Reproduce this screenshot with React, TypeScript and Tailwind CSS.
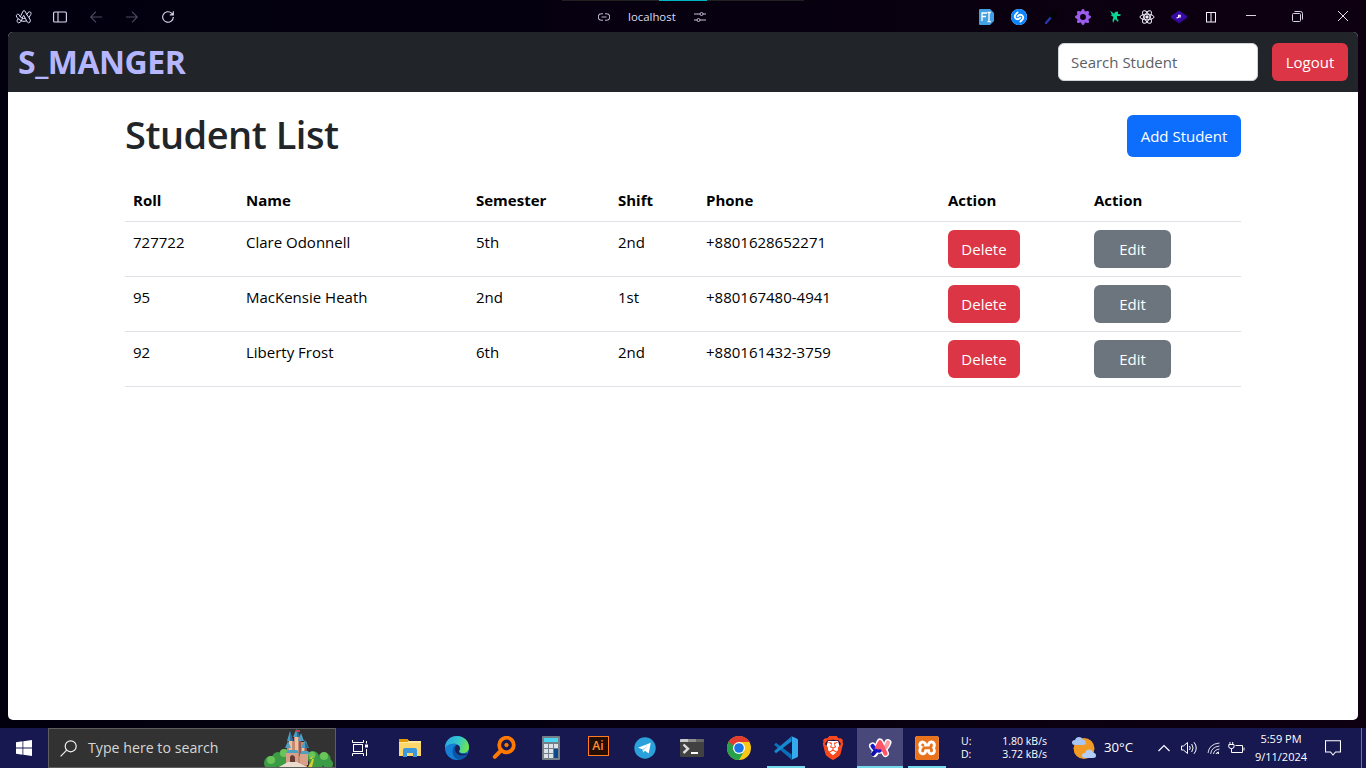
import type { ReactNode } from "react";
import { SiBrave, SiShazam, SiXampp } from "react-icons/si";
import { BsGearFill } from "react-icons/bs";

const students = [
  { roll: "727722", name: "Clare Odonnell", semester: "5th", shift: "2nd", phone: "+8801628652271" },
  { roll: "95", name: "MacKensie Heath", semester: "2nd", shift: "1st", phone: "+880167480-4941" },
  { roll: "92", name: "Liberty Frost", semester: "6th", shift: "2nd", phone: "+880161432-3759" },
];

function ArcOutline() {
  const d = "M5.5 11.5L9 4.3L13 12M3 8.8C6 12 11 10 13.8 5.5M2.2 13.2L5 12.5";
  return (
    <svg width="18" height="16" viewBox="0 0 18 16" fill="none" strokeLinejoin="round" strokeLinecap="round">
      <path
        d="M6.2 6L8 2.2Q9 1 10.2 2.3L11.8 5.7L13 3.5Q14.2 2.2 15.8 3.3Q16.5 4.2 15.8 5.5L14 8.5L15.4 11.2Q15.7 13.5 13.5 13.8Q12.3 13.6 11.6 11.8Q9 13 6.4 11.8Q5.4 13.9 3.5 13.8Q1.4 13 2.2 11.2L3.2 9.8Q1 8 1.3 6.3Q2.3 4.5 4 5.5L5.1 7.6ZM7.4 9.3Q8.8 9.8 10.2 9.2L8.9 6.7ZM5.1 7.6L7.4 9.3L6.4 11.8M3.2 9.8L6.4 11.8M11.8 5.7L14 8.5M10.2 9.2L11.6 11.8"
        stroke="#dcdcf4"
        strokeWidth="1"
      />
      <path d={d} stroke="none" />
    </svg>
  );
}

function ArcLogo() {
  return (
    <svg width="24" height="22" viewBox="0 0 24 22" fill="none" strokeLinecap="round" strokeLinejoin="round">
      <path d="M4.5 9C8 16 17 14 20 5.5M6.5 16.5L12 5L17.5 16.5M9 12H15" stroke="#fff" strokeWidth="7" />
      <path d="M15.5 12Q19 9.5 20 5.5" stroke="#ff9aa4" strokeWidth="4.2" />
      <path d="M4.5 9Q7 13.3 11.5 13.5" stroke="#1717c9" strokeWidth="4.2" />
      <path d="M5 17L8 13.5" stroke="#1010a8" strokeWidth="4.2" />
      <path d="M8.8 11L12 5.2L17.5 16.5M10 12.2H14" stroke="#ff5368" strokeWidth="4.2" />
      <path d="M7.5 13.2Q9.8 14.3 12 13.8" stroke="#1717c9" strokeWidth="3" />
    </svg>
  );
}

function TopBar() {
  return (
    <header className="flex h-8 shrink-0 items-center pt-px text-[#dcdcf2]">
      <div className="flex w-[562px] items-center pl-[15px]">
        <ArcOutline />
        <svg className="ml-5" width="14" height="12" viewBox="0 0 14 12" fill="none" stroke="#e0dcf5" strokeWidth="1.1">
          <rect x="0.6" y="1" width="12.8" height="10" rx="1" />
          <path d="M5 1V11" />
        </svg>
        <svg className="ml-[23px]" width="12" height="12" viewBox="0 0 12 12" fill="none" stroke="#504b62" strokeWidth="1.1">
          <path d="M12 6H0.8M6 0.7L0.7 6L6 11.3" />
        </svg>
        <svg className="ml-6" width="12" height="12" viewBox="0 0 12 12" fill="none" stroke="#504b62" strokeWidth="1.1">
          <path d="M0 6H11.2M6 0.7L11.3 6L6 11.3" />
        </svg>
        <svg className="ml-6" width="12" height="12" viewBox="0 0 12 12" fill="none" stroke="#e0dcf5" strokeWidth="1.1">
          <path d="M11.3 6A5.3 5.3 0 1 1 9.6 2.1L11.2 3.8M11.3 0.3V3.9H7.8" />
        </svg>
      </div>
      <div className="-mt-px flex h-8 w-[242px] flex-col">
        <div className="flex h-px justify-center bg-[#202020]">
          <div className="w-12 bg-[#00b5c2]" />
        </div>
        <div className="flex flex-1 items-center pt-px">
          <svg className="ml-9" width="12" height="8" viewBox="0 0 12 8" fill="none" stroke="#bab5cc" strokeWidth="1.1">
            <path d="M5 0.8H3.5A3 3 0 0 0 3.5 7.2H5M7 0.8H8.5A3 3 0 0 1 8.5 7.2H7M3.5 4H8.5" />
          </svg>
          <span className="ml-[18px] w-[48px] text-[11.4px] leading-4 whitespace-nowrap">localhost</span>
          <svg className="ml-[18px]" width="12" height="12" viewBox="0 0 12 12" fill="none" stroke="#c4c0d6" strokeWidth="1">
            <path d="M0 3H6M9 3H12M0 9H3M6 9H12" />
            <circle cx="7.5" cy="3" r="1.5" />
            <circle cx="4.5" cy="9" r="1.5" />
          </svg>
        </div>
      </div>
      <div className="flex flex-1 items-center pl-[174px]">
        <div className="flex w-[240px] items-center">
          <svg width="18" height="16" viewBox="0 0 18 16">
            <path d="M2 0H12L16 4V12L12 16H2Q1 16 1 15V1Q1 0 2 0Z" fill="#42a1e2" />
            <path d="M4 12V4H9M4 7.5H8M9.5 3.5H10.5L11 4.2L11.5 3.5H12.8M11 4.2V12L10.3 12.7H9.5M11 12L11.7 12.7H12.8" stroke="#fff" strokeWidth="1.3" fill="none" />
          </svg>
          <span className="ml-[15px] flex size-4 items-center justify-center rounded-full bg-white">
            <SiShazam size={16} color="#0a84ff" />
          </span>
          <svg className="ml-4" width="16" height="16" viewBox="0 0 16 16">
            <path d="M3 14L9 7" stroke="#2738ad" strokeWidth="2.4" strokeLinecap="round" />
            <path d="M8.5 7.5L13.5 2.2M8.5 4.5L12 8" stroke="#030305" strokeWidth="3" strokeLinecap="round" />
          </svg>
          <BsGearFill className="ml-4" size={16} color="#9d5cf0" />
          <svg className="ml-4" width="16" height="16" viewBox="0 0 16 16" fill="#08d795">
            <path d="M3 2L5 3L7 5L8 3L11 2.5L11 5L14 5.5L13 7L10 7L10 10L11.5 11L11 13L8 10L6 14L5.5 11L6.5 8L3.5 6L5 5.5Z" />
          </svg>
          <svg className="ml-4" width="16" height="16" viewBox="0 0 16 16" fill="none" stroke="#eeeaf8" strokeWidth="1">
            <ellipse cx="8" cy="8" rx="7" ry="2.8" />
            <ellipse cx="8" cy="8" rx="7" ry="2.8" transform="rotate(60 8 8)" />
            <ellipse cx="8" cy="8" rx="7" ry="2.8" transform="rotate(120 8 8)" />
            <circle cx="8" cy="8" r="1.2" fill="#fff" />
          </svg>
          <svg className="ml-4" width="16" height="16" viewBox="0 0 16 16">
            <path d="M8 1.5L16 7V8.8L8 14.5L0 8.8V7Z" fill="#3a0aa8" />
            <path d="M0 8L8 13L16 8V8.8L8 14.5L0 8.8Z" fill="#2c0779" />
            <path d="M5.5 9L7.8 8.2M7.6 6.3H9.2V8H7.6Z" stroke="#fff" strokeWidth="1.1" fill="none" />
          </svg>
        </div>
        <svg className="-ml-[13px]" width="12" height="12" viewBox="0 0 12 12" fill="none" stroke="#f5f0ff" strokeWidth="1">
          <rect x="1.5" y="1.5" width="9" height="9.5" />
          <path d="M6 1.5V11" />
        </svg>
        <svg className="ml-[29px]" width="10" height="10" viewBox="0 0 10 10" stroke="#d8d2e6" strokeWidth="1">
          <path d="M0 3.5H10" />
        </svg>
        <svg className="ml-[36px]" width="11" height="11" viewBox="0 0 11 11" fill="none" stroke="#d8d2e6" strokeWidth="1">
          <rect x="0.5" y="2.5" width="8" height="8" rx="1" />
          <path d="M2.5 0.5H8.5Q10.5 0.5 10.5 2.5V8.5" />
        </svg>
        <svg className="ml-[35px]" width="10" height="11" viewBox="0 0 10 11" stroke="#e4dfee" strokeWidth="1">
          <path d="M0 0L10 10M10 0L0 10" />
        </svg>
      </div>
    </header>
  );
}

function Page() {
  return (
    <main className="mx-2 flex h-[688px] shrink-0 flex-col overflow-hidden rounded-[5px] bg-white">
      <nav className="flex h-[60px] items-center justify-between bg-[#212529] pr-2.5 pl-2.5">
        <div className="text-[32px] leading-[48px] font-bold tracking-[-0.5px] text-[#b6b5ff]">S_MANGER</div>
        <div className="flex gap-3.5">
          <div className="flex h-[38px] w-[200px] items-center rounded-md border border-[#ced4da] bg-white px-3 text-[15px] text-[#5b6066]">
            Search Student
          </div>
          <button className="h-[38px] w-[76px] rounded-md bg-[#dc3545] text-[15px] text-white">Logout</button>
        </div>
      </nav>
      <section className="ml-[117px] w-[1116px]">
        <div className="flex h-[88px] items-start justify-between">
          <h1 className="mt-[18px] text-[38px] leading-[48px] font-semibold tracking-[-0.5px] whitespace-nowrap text-[#212529]">Student List</h1>
          <button className="mt-[23px] h-[42px] w-[114px] rounded-md bg-[#0d6efd] text-[15px] text-white">Add Student</button>
        </div>
        <table className="w-full table-fixed border-collapse text-left text-[15px] leading-6 text-black">
          <colgroup>
            <col className="w-[113px]" />
            <col className="w-[230px]" />
            <col className="w-[142px]" />
            <col className="w-[88px]" />
            <col className="w-[242px]" />
            <col className="w-[146px]" />
            <col className="w-[155px]" />
          </colgroup>
          <thead>
            <tr className="h-[41px] border-b border-[#dee2e6]">
              {["Roll", "Name", "Semester", "Shift", "Phone", "Action", "Action"].map((h, i) => (
                <th key={i} className="p-2 font-bold">{h}</th>
              ))}
            </tr>
          </thead>
          <tbody>
            {students.map((s) => (
              <tr key={s.roll} className="h-[55px] border-b border-[#dee2e6] align-top">
                <td className="p-2">{s.roll}</td>
                <td className="p-2">{s.name}</td>
                <td className="p-2">{s.semester}</td>
                <td className="p-2">{s.shift}</td>
                <td className="p-2">{s.phone}</td>
                <td className="p-2">
                  <button className="block h-[38px] w-[72px] rounded-md bg-[#dc3545] text-white">Delete</button>
                </td>
                <td className="p-2">
                  <button className="block h-[38px] w-[77px] rounded-md bg-[#6c757d] text-white">Edit</button>
                </td>
              </tr>
            ))}
          </tbody>
        </table>
      </section>
    </main>
  );
}

function Castle() {
  return (
    <svg width="70" height="38" viewBox="0 0 70 38">
      <g fill="#3c9b45">
        <circle cx="7" cy="34" r="7" />
        <circle cx="14" cy="29" r="6" />
        <circle cx="21" cy="26" r="6" />
        <circle cx="20" cy="35" r="7" />
        <circle cx="49" cy="28" r="6" />
        <circle cx="60" cy="30" r="6.5" />
        <circle cx="64" cy="35" r="5" />
        <circle cx="52" cy="35" r="7" />
      </g>
      <g fill="#6ac45a">
        <circle cx="7" cy="31" r="4" />
        <circle cx="20" cy="24" r="4" />
        <circle cx="48" cy="26" r="3.5" />
        <circle cx="60" cy="27" r="4" />
      </g>
      <path d="M45 30L49 27L47 33L44 38H48L50 30Z" fill="#d7cf2c" />
      <path d="M25 12H30V7H37V13H43V38H23V18Z" fill="#c58a72" />
      <path d="M25 12H28V27H25ZM31 7H34V25H31ZM38 18H40V28H38Z" fill="#edc0a1" />
      <path d="M35 8V27H37V8ZM41 18V30H43V18Z" fill="#925b58" />
      <path d="M23 12L26 2L29 12ZM29 8L32.5 0L36 8ZM34 12L37 4L40 12ZM37 19L41 11L45 19ZM21 19L24 12L27 19Z" fill="#4d9fc4" />
      <path d="M26 2L29 12H26ZM32.5 0L36 8H33ZM41 11L45 19H41Z" fill="#286f9c" />
      <path d="M31 1H36V3H33Z" fill="#d33a3f" />
      <path d="M22 24L24 21H33L35 24ZM36 25L38 22H44L46 25Z" fill="#4fa0bf" />
      <path d="M22 24H34V35H22ZM36 25H44V36H36Z" fill="#d7a088" />
      <path d="M26 34V28Q28 24 31 28V34Z" fill="#673c35" />
      <path d="M24 33H33L43 38H15Z" fill="#eadcce" />
    </svg>
  );
}

function Slot({ children, state = "idle" }: { children: ReactNode; state?: "idle" | "open" | "active" }) {
  return (
    <div className={`ml-px flex h-10 w-[46px] shrink-0 flex-col items-center ${state === "active" ? "bg-[#48487a]" : ""}`}>
      <div className="flex h-[38px] items-center justify-center pt-0.5">{children}</div>
      {state === "open" && <div className="h-0.5 w-[38px] bg-[#76d9ea]" />}
      {state === "active" && <div className="h-0.5 w-full bg-[#76d9ea]" />}
    </div>
  );
}

function TaskIcons() {
  return (
    <div className="flex w-[566px] shrink-0 pl-0.5">
      <Slot>
        <svg width="22" height="20" viewBox="0 0 22 20">
          <path d="M0 2Q0 1 1 1H8L10 3H22V18H0Z" fill="#fdd76a" />
          <path d="M0 1.5Q0 1 1 1H8L10 2.5L8.5 4H0Z" fill="#df9b00" />
          <path d="M0 4H8.5L10 3H22V5H0Z" fill="#ffe79b" />
          <path d="M4 19V12Q4 10 6 10H16Q18 10 18 12V19H14V15H8V19Z" fill="#3d97dd" />
        </svg>
      </Slot>
      <Slot>
        <svg width="24" height="24" viewBox="0 0 24 24">
          <defs>
            <linearGradient id="edgeTop" x1="0" y1="0.2" x2="1" y2="0.5">
              <stop offset="0" stopColor="#27a7e7" />
              <stop offset="0.55" stopColor="#35c8c7" />
              <stop offset="1" stopColor="#6ee64d" />
            </linearGradient>
          </defs>
          <circle cx="12" cy="12" r="12" fill="#147fd4" />
          <path d="M0 12C0 4.5 5.5 0 12 0C19 0 24 5 24 11C24 15 21 17 18 17C15 17 13.5 15.5 14.5 14.3C16.5 12 14 7.5 9 7.5C4 7.5 0.5 10.5 0 12Z" fill="url(#edgeTop)" />
          <path d="M11 9C6 11 6 22 14 24C18 23.5 21 21.5 22.5 18.6C17 21 10 19 10 13Q10 10.5 11 9Z" fill="#0b55a4" />
          <path d="M11 9Q9.5 11 10 14C10.5 18.7 16.5 21 22 18.5Q23 17 21 17.5C17.5 18.4 12.5 17.5 14.5 14.3Q16 11.5 13 9Z" fill="#17205b" />
        </svg>
      </Slot>
      <Slot>
        <svg width="24" height="24" viewBox="0 0 24 24" fill="none" stroke="#ff7900">
          <circle cx="14.5" cy="9" r="7.3" strokeWidth="3.8" />
          <path d="M9 14.5L2.8 20.8" strokeWidth="4" strokeLinecap="round" />
          <circle cx="14.5" cy="9" r="1.7" fill="#ff7900" strokeWidth="1" />
        </svg>
      </Slot>
      <Slot>
        <svg width="18" height="24" viewBox="0 0 18 24">
          <rect width="18" height="24" rx="1" fill="#737f89" />
          <rect x="2" y="2" width="14" height="4" fill="#4ad6f3" />
          <path d="M2 8H6V12H2ZM7 8H11V12H7ZM12 8H16V12H12ZM2 13H6V17H2ZM7 13H11V17H7ZM2 18H6V22H2ZM7 18H11V22H7Z" fill="#dde2e8" />
          <rect x="12" y="13" width="4" height="9" fill="#0b4789" />
        </svg>
      </Slot>
      <Slot>
        <div className="-mt-1 flex h-5 w-[21px] items-center justify-center border border-[#ff7c20] bg-[#240d03] font-['Open_Sans'] text-[12px] leading-none font-semibold text-[#ff8b35]">Ai</div>
      </Slot>
      <Slot>
        <svg width="22" height="22" viewBox="0 0 22 22">
          <circle cx="11" cy="11" r="10.7" fill="#2ba1dc" />
          <path d="M4 10.8L16.8 5.8L14.7 16.4L11 13.7L9.2 15.5L8.5 12.3Z" fill="#fff" />
          <path d="M8.5 12.3L14.5 8L10 13L9.2 15.5Z" fill="#b7d9ec" />
        </svg>
      </Slot>
      <Slot>
        <svg width="24" height="18" viewBox="0 0 24 18">
          <rect width="24" height="18" rx="1" fill="#414141" />
          <path d="M0 1Q0 0 1 0H8V3H0Z" fill="#c8c8c8" />
          <path d="M8 0H16V3H8Z" fill="#8f8f8f" />
          <path d="M16 0H23Q24 0 24 1V3H16Z" fill="#666" />
          <path d="M3.5 5.5L8 9.8L3.5 14" fill="none" stroke="#ddd" strokeWidth="2.4" />
          <path d="M11 14H18" stroke="#fff" strokeWidth="2" />
        </svg>
      </Slot>
      <Slot>
        <svg width="24" height="24" viewBox="0 0 24 24">
          <circle cx="12" cy="12" r="12" fill="#f9c816" />
          <path d="M1.6 6A12 12 0 0 0 12 24L17.2 15L12 12Z" fill="#26a24a" />
          <path d="M1.6 6A12 12 0 0 1 22.4 6H12L6.8 15Z" fill="#e33b2f" />
          <path d="M1.6 6L6.8 15L12 17V12L6 9Z" fill="#26a24a" />
          <circle cx="12" cy="12" r="6" fill="#fff" />
          <circle cx="12" cy="12" r="4.8" fill="#1a73e8" />
        </svg>
      </Slot>
      <Slot state="open">
        <svg width="24" height="24" viewBox="0 0 24 24">
          <path d="M0.5 8.2L2 6.8L17.5 18.5V23.5L0.5 9.2Z" fill="#0871b9" />
          <path d="M0.5 15.8L2 17.2L17.5 5.5V0.5L0.5 14.8Z" fill="#1688ce" />
          <path d="M17 0L22.8 2.4Q24 3 24 4V20Q24 21 22.8 21.6L17 24Q18 23.3 18 22V2Q18 0.7 17 0Z" fill="#35a9ed" />
        </svg>
      </Slot>
      <Slot>
        <span className="flex size-6 items-center justify-center">
          <svg width="24" height="24" viewBox="0 0 24 24">
            <path d="M7 5H17L18.5 10L16 17L12 20L8 17L5.5 10Z" fill="#fff" />
            <SiBrave size={24} color="#fa471d" />
          </svg>
        </span>
      </Slot>
      <Slot state="active">
        <ArcLogo />
      </Slot>
      <Slot state="open">
        <span className="flex size-6 items-center justify-center rounded-[3px] bg-white">
          <SiXampp size={24} color="#e9731d" />
        </span>
      </Slot>
    </div>
  );
}

function Taskbar() {
  return (
    <footer className="mt-2 flex h-10 shrink-0 items-center bg-[#181850] text-white">
      <div className="flex w-12 shrink-0 justify-center">
        <svg width="16" height="16" viewBox="0 0 16 16" fill="#fff">
          <path d="M0 2.3L6.5 1.3V7.6H0ZM7.3 1.2L16 0V7.6H7.3ZM0 8.4H6.5V14.7L0 13.8ZM7.3 8.4H16V16L7.3 14.8Z" />
        </svg>
      </div>
      <div className="flex h-10 w-72 shrink-0 items-center overflow-hidden border border-[#5e5e5e] bg-[#323232]">
        <svg className="ml-[11px]" width="17" height="17" viewBox="0 0 17 17" fill="none" stroke="#f2f2f2" strokeWidth="1.2">
          <circle cx="10.7" cy="6.3" r="5.5" />
          <path d="M6.7 10.2L0.6 16.3" />
        </svg>
        <span className="ml-[11px] w-[176px] text-[14.2px] whitespace-nowrap text-[#d6d6d6]">Type here to search</span>
        <Castle />
      </div>
      <div className="flex w-12 shrink-0 justify-center">
        <svg width="16" height="16" viewBox="0 0 16 16" fill="none" stroke="#fff" strokeWidth="1">
          <rect x="1.5" y="4.5" width="9" height="7" />
          <path d="M0.5 0V2.5H11.5V0M0.5 16V13.5H11.5V16M14.5 1V3.5M14.5 9V16" />
          <rect x="13.5" y="5" width="2" height="2" fill="#fff" />
        </svg>
      </div>
      <TaskIcons />
      <div className="ml-[11px] flex w-[86px] shrink-0 flex-col text-[10.5px] leading-[13px]">
        <div className="flex justify-between"><span>U:</span><span>1.80 kB/s</span></div>
        <div className="flex justify-between"><span>D:</span><span>3.72 kB/s</span></div>
      </div>
      <svg className="ml-[25px] shrink-0" width="24" height="24" viewBox="0 0 24 24">
        <circle cx="12" cy="12.5" r="10.5" fill="#f29b24" />
        <path d="M3 9Q0 9 0 6.5Q0 4 3 4Q4 1 7 1Q10 1 11 4Q14 4 14 6.7Q14 9 11.5 9Z" fill="#a9c5f2" />
        <path d="M13 22Q10 22 10 19.5Q10 17 13 17Q14 13.5 17 13.5Q20 13.5 21 16.5Q24 17 24 19.5Q24 22 21 22Z" fill="#b4cff7" />
      </svg>
      <span className="ml-2 w-[50px] shrink-0 text-[13.2px] whitespace-nowrap">30°C</span>
      <svg className="ml-1 shrink-0" width="12" height="8" viewBox="0 0 12 8" fill="none" stroke="#fff" strokeWidth="1.2">
        <path d="M0.5 7L6 1.5L11.5 7" />
      </svg>
      <svg className="ml-[11px] shrink-0" width="17" height="14" viewBox="0 0 17 14" fill="none" stroke="#fff" strokeWidth="1">
        <path d="M0.5 5V9H2.5L6.5 12.5V1.5L2.5 5ZM8.5 5Q10 7 8.5 9M10.7 3Q13.5 7 10.7 11M13 1.2Q17.5 7 13 12.8" />
      </svg>
      <svg className="ml-[9px] shrink-0" width="14" height="14" viewBox="0 0 14 14" fill="none" stroke="#fff" strokeWidth="1">
        <path d="M1 12Q2 3 12.5 2M3.7 13Q4.2 6 12.5 5M6.5 13Q7 8.8 12.5 8" opacity="0.85" />
        <path d="M9 13Q9.3 11.3 12 11" />
        <rect x="10.5" y="11.5" width="1.5" height="1.5" fill="#fff" stroke="none" />
      </svg>
      <svg className="ml-[7px] shrink-0" width="17" height="14" viewBox="0 0 17 14" fill="none" stroke="#fff" strokeWidth="1">
        <path d="M2 1V3.5M4.7 1V3.5M0.8 3.5H6V6Q6 7.5 3.5 7.5Q1 7.5 0.8 6ZM3.5 7.5V11.5H14.5V4.5H7.5M16 6.5V9.5" />
      </svg>
      <div className="ml-[3px] flex w-[66px] shrink-0 flex-col items-center text-[11px] leading-[18px] whitespace-nowrap">
        <span>5:59 PM</span>
        <span>9/11/2024</span>
      </div>
      <svg className="ml-[11px] shrink-0" width="16" height="16" viewBox="0 0 16 16" fill="none" stroke="#fff" strokeWidth="1.1">
        <path d="M0.5 0.8H15.5V12H10.5L8 15L5.5 12H0.5Z" />
      </svg>
      <div className="ml-5 h-10 w-px bg-[#74749a]" />
    </footer>
  );
}

export default function App() {
  return (
    <div className="flex h-[768px] w-[1366px] flex-col overflow-hidden bg-linear-to-r from-[#02000f] to-[#0e0010] font-['Open_Sans','Noto_Sans',sans-serif]">
      <TopBar />
      <Page />
      <Taskbar />
    </div>
  );
}
